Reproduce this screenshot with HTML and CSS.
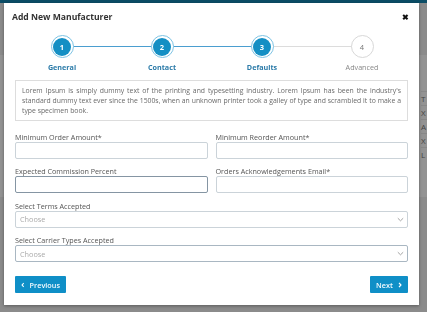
FILE: index.html
```html
<!DOCTYPE html>
<html>
<head>
<meta charset="utf-8">
<link rel="stylesheet" href="styles.css">
</head>
<body>
<div class="page">
  <div class="topbar"></div>
  <div class="bgcard">
    <div class="bgrow">T</div>
    <div class="bgrow">X</div>
    <div class="bgrow">A</div>
    <div class="bgrow">X</div>
    <div class="bgrow">L</div>
  </div>
</div>
<div class="modal">
  <div class="modal-head">
    <h1 class="title">Add New Manufacturer</h1>
    <span class="close">&#10006;</span>
  </div>
  <div class="stepper">
    <div class="step done"><div class="circle"><span>1</span></div><div class="label">General</div></div>
    <div class="step done"><div class="circle"><span>2</span></div><div class="label">Contact</div></div>
    <div class="step done last-done"><div class="circle"><span>3</span></div><div class="label">Defaults</div></div>
    <div class="step todo"><div class="circle"><span>4</span></div><div class="label">Advanced</div></div>
  </div>
  <div class="body">
    <div class="info">Lorem Ipsum is simply dummy text of the printing and typesetting industry. Lorem Ipsum has been the industry's standard dummy text ever since the 1500s, when an unknown printer took a galley of type and scrambled it to make a type specimen book.</div>
    <div class="grid">
      <div class="field"><label>Minimum Order Amount*</label><div class="input"></div></div>
      <div class="field"><label>Minimum Reorder Amount*</label><div class="input"></div></div>
      <div class="field"><label>Expected Commission Percent</label><div class="input focus"></div></div>
      <div class="field"><label>Orders Acknowledgements Email*</label><div class="input"></div></div>
      <div class="field wide"><label>Select Terms Accepted</label><div class="input select"><span>Choose</span><svg width="7" height="5" viewBox="0 0 7 5"><path d="M0.8 1.2 L3.5 3.8 L6.2 1.2" fill="none" stroke="#999" stroke-width="0.9"/></svg></div></div>
      <div class="field wide"><label>Select Carrier Types Accepted</label><div class="input select focus2"><span>Choose</span><svg width="7" height="5" viewBox="0 0 7 5"><path d="M0.8 1.2 L3.5 3.8 L6.2 1.2" fill="none" stroke="#999" stroke-width="0.9"/></svg></div></div>
    </div>
    <div class="actions">
      <button class="btn"><svg width="6" height="8" viewBox="0 0 6 8"><path d="M4.5 1 L1.8 4 L4.5 7" fill="none" stroke="#fff" stroke-width="1.8"/></svg><span>Previous</span></button>
      <button class="btn"><span>Next</span><svg width="6" height="8" viewBox="0 0 6 8"><path d="M1.5 1 L4.2 4 L1.5 7" fill="none" stroke="#fff" stroke-width="1.8"/></svg></button>
    </div>
  </div>
</div>
</body>
</html>
```
FILE: styles.css
```css
* { box-sizing: border-box; }
html, body { margin: 0; padding: 0; }
body {
  width: 427px;
  height: 312px;
  overflow: hidden;
  background: #8b8b8b;
  font-family: "Open Sans", "Liberation Sans", sans-serif;
}
.page { height: 312px; }
.topbar { height: 3px; background: #0b4d66; }
.bgcard {
  margin-top: 52px;
  height: 142px;
  background: #939393;
  padding: 36px 0 0 421px;
}
.bgrow {
  font-size: 8px;
  line-height: 13px;
  color: #444;
  border-top: 1px solid #888;
}
.modal {
  position: fixed;
  left: 4px;
  top: 3px;
  width: 415px;
  height: 302px;
  background: #fff;
  box-shadow: 0 1px 3px rgba(0,0,0,0.35);
  display: flex;
  flex-direction: column;
}
.modal-head {
  height: 27px;
  display: flex;
  align-items: center;
  justify-content: space-between;
  padding: 0 10px 0 8px;
}
.title {
  margin: 0;
  font-size: 8.6px;
  font-weight: 700;
  color: #333;
}
.close { font-size: 8px; font-weight: 700; color: #111; }
.stepper {
  display: flex;
  padding: 5px 7px 0 8px;
  height: 47px;
}
.step {
  flex: 1;
  display: flex;
  flex-direction: column;
  align-items: center;
  position: relative;
}
.step::after {
  content: "";
  position: absolute;
  top: 10.5px;
  left: 50%;
  width: 100%;
  height: 1px;
  background: #4b9ed0;
  z-index: 0;
}
.step.last-done::after { background: #dcdcdc; }
.step.todo::after { display: none; }
.circle {
  position: relative;
  z-index: 1;
  width: 23px;
  height: 23px;
  border-radius: 50%;
  border: 1px solid #7cc3e4;
  background: #fff;
  display: flex;
  align-items: center;
  justify-content: center;
}
.circle span {
  width: 18px;
  height: 18px;
  border-radius: 50%;
  background: #148fc4;
  color: #fff;
  font-size: 7.5px;
  font-weight: 700;
  display: flex;
  align-items: center;
  justify-content: center;
}
.todo .circle { border-color: #d8d8d8; }
.todo .circle span { background: #fff; color: #777; font-weight: 400; }
.label {
  margin-top: 4px;
  font-size: 7.2px;
  font-weight: 700;
  color: #2a7aa8;
}
.todo .label { color: #888; font-weight: 400; }
.body { padding: 3px 11px 0 11px; }
.info {
  border: 1px solid #ddd;
  padding: 5px 6px 5px 6px;
  font-size: 6.85px;
  line-height: 10px;
  color: #6a6a6a;
  text-align: justify;
  height: 41px;
}
.grid {
  margin-top: 11px;
  display: grid;
  grid-template-columns: 1fr 1fr;
  column-gap: 8px;
  row-gap: 7.4px;
}
.field { display: flex; flex-direction: column; }
.field.wide { grid-column: 1 / 3; }
label {
  font-size: 7.2px;
  line-height: 10px;
  color: #555;
  height: 10px;
}
.input {
  height: 17px;
  border: 1px solid #cbd3d9;
  border-radius: 2px;
}
.input.focus { border-color: #8595a3; }
.input.focus2 { border-color: #a9b7c2; }
.select {
  display: flex;
  align-items: center;
  justify-content: space-between;
  padding: 0 3px 0 4px;
  font-size: 7.3px;
  color: #aaa;
}
.actions {
  margin-top: 14px;
  display: flex;
  justify-content: space-between;
}
.btn {
  height: 17px;
  border: 0;
  border-radius: 1px;
  background: #0f8fc7;
  color: #f4fbff;
  font-family: inherit;
  font-size: 7.3px;
  font-weight: 600;
  display: flex;
  align-items: center;
  gap: 5px;
  padding: 0 6px;
}
.btn:first-child { width: 51px; }
.btn:last-child { width: 38px; justify-content: flex-end; }
```
